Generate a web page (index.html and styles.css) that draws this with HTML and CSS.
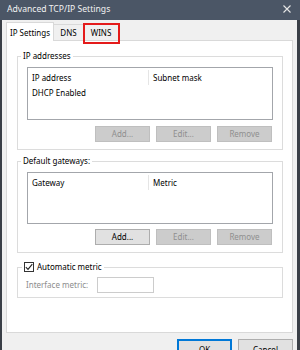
FILE: index.html
```html
<!DOCTYPE html>
<html>
<head>
<meta charset="utf-8">
<link rel="stylesheet" href="styles.css">
</head>
<body>
<div class="window">
  <div class="titlebar">
    <span class="title">Advanced TCP/IP Settings</span>
    <svg class="close" width="8" height="8" viewBox="0 0 8 8"><path d="M0.5 0.5L7.5 7.5M7.5 0.5L0.5 7.5" stroke="#e6e6e6" stroke-width="1.1" fill="none"/></svg>
  </div>
  <div class="frame">
    <div class="tabs">
      <div class="tab active">IP Settings</div>
      <div class="tab dns">DNS</div>
      <div class="tab wins">WINS<span class="highlight"></span></div>
    </div>
    <div class="panel">
      <fieldset class="group g1">
        <legend>IP addresses</legend>
        <div class="list">
          <div class="list-head"><span class="col c1">IP address</span><span class="col c2">Subnet mask</span></div>
          <div class="list-row"><span class="col c1">DHCP Enabled</span></div>
        </div>
        <div class="btns">
          <button class="btn" disabled>Add...</button>
          <button class="btn" disabled>Edit...</button>
          <button class="btn" disabled>Remove</button>
        </div>
      </fieldset>
      <fieldset class="group g2">
        <legend>Default gateways:</legend>
        <div class="list">
          <div class="list-head"><span class="col c1">Gateway</span><span class="col c2">Metric</span></div>
        </div>
        <div class="btns">
          <button class="btn">Add...</button>
          <button class="btn" disabled>Edit...</button>
          <button class="btn" disabled>Remove</button>
        </div>
      </fieldset>
      <fieldset class="group g3">
        <legend class="check-legend">
          <span class="checkbox"><svg width="8" height="8" viewBox="0 0 8 8"><path d="M0.8 4.2L3 6.4L7.3 1.2" stroke="#222" stroke-width="1.1" fill="none"/></svg></span>
          <span>Automatic metric</span>
        </legend>
        <div class="metric-row">
          <span class="metric-label">Interface metric:</span>
          <span class="metric-input"></span>
        </div>
      </fieldset>
    </div>
    <div class="footer">
      <button class="btn ok">OK</button>
      <button class="btn">Cancel</button>
    </div>
  </div>
</div>
</body>
</html>
```

FILE: styles.css
```css
* { box-sizing: border-box; }
html, body { margin: 0; padding: 0; }
body {
  width: 300px;
  height: 350px;
  overflow: hidden;
  background: #f0f0f0;
  font-family: "Noto Sans", "Open Sans", sans-serif;
  font-size: 8px;
  line-height: 10px;
  color: #000;
}
.window { width: 300px; height: 350px; display: flex; flex-direction: column; }
.titlebar {
  height: 20px;
  flex: none;
  background: #4b5666;
  color: #f2f2f2;
  display: flex;
  align-items: center;
  justify-content: space-between;
  padding: 0 9px 2px 7px;
}
.title { font-size: 8.6px; }
.close { display: block; }
.frame {
  flex: 1;
  border-left: 2px solid #3a3f47;
  border-right: 3px solid #3a3f47;
  padding: 2px 4px 0 4px;
  display: flex;
  flex-direction: column;
}
.tabs { display: flex; align-items: flex-end; height: 18px; flex: none; }
.tab {
  height: 16px;
  border: 1px solid #d9d9d9;
  border-bottom: none;
  background: #f0f0f0;
  display: flex;
  align-items: center;
  justify-content: center;
  padding-top: 1px;
}
.tab.active {
  height: 19px;
  width: 48px;
  background: #fff;
  margin-bottom: -1px;
  position: relative;
  z-index: 1;
}
.tab.dns { width: 30px; border-left: none; }
.tab.wins { width: 35px; border-left: none; position: relative; }
.highlight {
  position: absolute;
  left: -1px;
  top: -2px;
  width: 37px;
  height: 21px;
  border: 2px solid #e41b1b;
}
.panel {
  height: 293px;
  flex: none;
  background: #fff;
  border: 1px solid #d9d9d9;
  padding-top: 10px;
}
.group {
  margin: 0 9px 0 10px;
  border: 1px solid #dcdcdc;
  padding: 6px 9px 7px 9px;
  min-width: 0;
}
.group legend { margin-left: -6px; padding: 0 2px; }
.g2 { margin-top: 6px; }
.g3 { margin-top: 9px; padding-top: 5px; padding-bottom: 4px; }
.list {
  height: 53px;
  border: 1px solid #a3a6ab;
  background: #fff;
}
.g2 .list { height: 52px; }
.list-head, .list-row { display: flex; height: 15px; align-items: center; }
.list-head { margin-top: 2px; }
.col { padding-left: 4px; }
.c1 { width: 121px; }
.list-head .c1 { border-right: 1px solid #e5e5e5; height: 15px; display: flex; align-items: center; }
.c2 { padding-left: 4px; }
.btns {
  display: flex;
  justify-content: flex-end;
  gap: 6px;
  margin-top: 6px;
  margin-right: 1px;
}
.g2 .btns { margin-top: 5px; }
.btn {
  width: 55px;
  height: 16px;
  padding: 0;
  font-family: inherit;
  font-size: 8px;
  line-height: 10px;
  color: #000;
  background: #e1e1e1;
  border: 1px solid #adadad;
  border-radius: 0;
}
.btn:disabled { background: #cccccc; border-color: #bfbfbf; color: #8f8f8f; }
.check-legend { display: flex; align-items: center; gap: 3px; margin-left: -5px !important; }
.checkbox {
  width: 10px;
  height: 10px;
  border: 1px solid #333;
  background: #fff;
  display: flex;
  align-items: center;
  justify-content: center;
}
.checkbox svg { display: block; }
.metric-row { display: flex; align-items: center; justify-content: space-between; margin-left: -1px; }
.metric-label { color: #8d8d8d; }
.metric-input {
  width: 57px;
  height: 16px;
  border: 1px solid #cccccc;
  background: #fff;
  margin-right: 119px;
}
.footer {
  display: flex;
  justify-content: flex-end;
  gap: 6px;
  margin-top: 6px;
}
.footer .btn { height: 22px; width: 55px; }
.footer .ok { border: 1px solid #0078d7; box-shadow: inset 0 0 0 1px #0078d7; }
```
